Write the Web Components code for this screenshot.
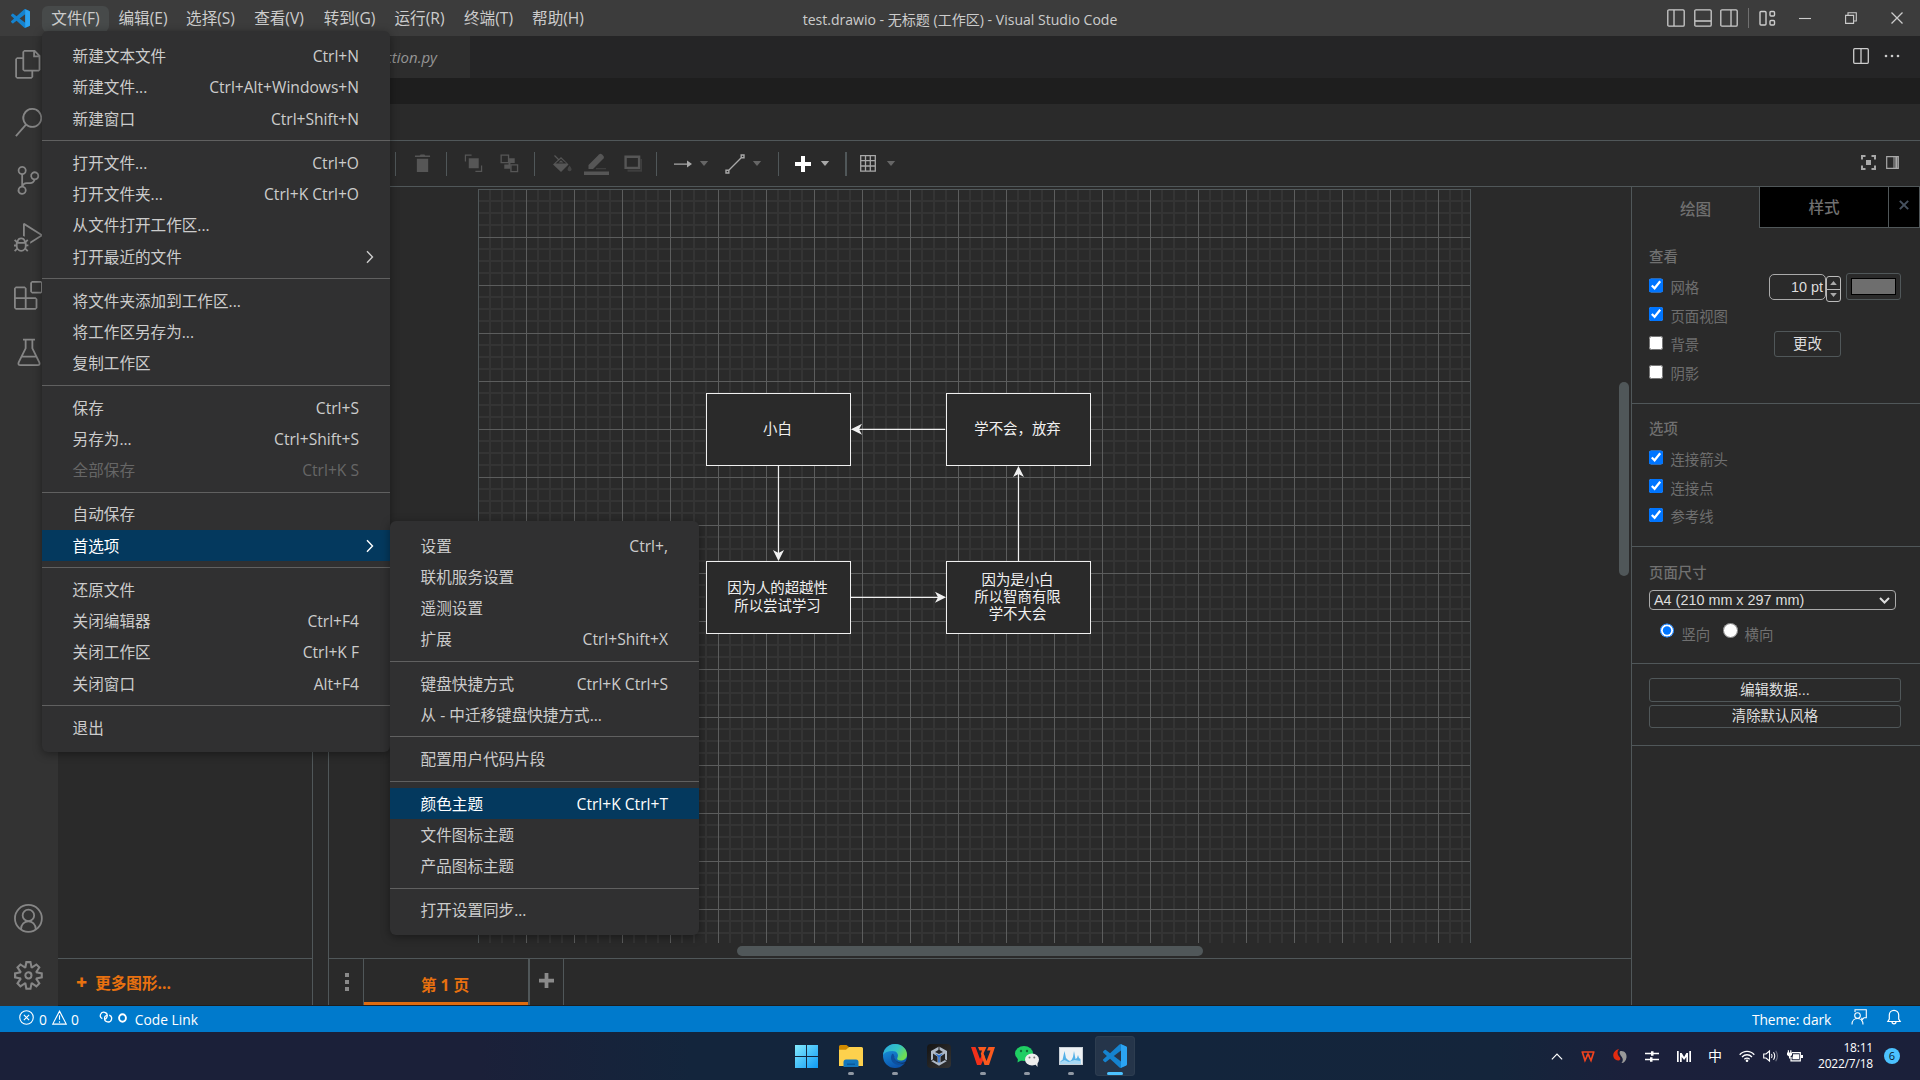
<!DOCTYPE html>
<html lang="zh-CN">
<head>
<meta charset="utf-8">
<title>test.drawio - 无标题 (工作区) - Visual Studio Code</title>
<style>
    html, body {
        margin: 0;
        width: 1920px;
        height: 1080px;
        overflow: hidden;
        background: #1e1e1e;
        font-family: "Open Sans", "Noto Sans CJK SC", sans-serif;
    }
</style>
</head>
<body>
<code-window></code-window>

<script>
const VSCODE = 'M23.15 2.587L18.21.21a1.494 1.494 0 0 0-1.705.29l-9.46 8.63-4.12-3.128a.999.999 0 0 0-1.276.057L.327 7.261A1 1 0 0 0 .326 8.74L3.899 12 .326 15.26a1 1 0 0 0 .001 1.479L1.65 17.94a.999.999 0 0 0 1.276.057l4.12-3.128 9.46 8.63a1.492 1.492 0 0 0 1.704.29l4.942-2.377A1.5 1.5 0 0 0 24 20.06V3.939a1.5 1.5 0 0 0-.85-1.352zm-5.146 14.861L10.826 12l7.178-5.448v10.896z'

// name: [viewBox, markup]
const ICONS = {
    vscode: ['0 0 24 24', `<path fill="#1583cf" d="${VSCODE}"/><path fill="#2ba4f3" d="M18 .2 23.2 2.6Q24 3 24 4v16q0 1-.8 1.4L18 23.8z"/>`],
    files: ['0 0 24 24', '<path d="M17.5 0h-9L7 1.5V6H2.5L1 7.5v15.07L2.5 24h12.07L16 22.57V18h4.7l1.3-1.43V4.5L17.5 0zm0 2.12l2.38 2.38H17.5V2.12zm-3 20.38h-12v-15H7v9.07L8.5 18h6v4.5zm6-6h-12v-15H16V6h4.5v10.5z"/>'],
    search: ['0 0 24 24', '<path d="M15.25 0a8.25 8.25 0 0 0-6.18 13.72L1 22.88l1.12 1 8.05-9.12A8.251 8.251 0 1 0 15.25.01V0zm0 15a6.75 6.75 0 1 1 0-13.5 6.75 6.75 0 0 1 0 13.5z"/>'],
    git: ['0 0 24 24', '<path d="M21.007 8.222A3.738 3.738 0 0 0 15.045 5.2a3.737 3.737 0 0 0 1.156 6.583 2.988 2.988 0 0 1-2.668 1.67h-2.99a4.456 4.456 0 0 0-2.989 1.165V7.4a3.737 3.737 0 1 0-1.494 0v9.117a3.776 3.776 0 1 0 1.816.099 2.99 2.99 0 0 1 2.668-1.667h2.99a4.484 4.484 0 0 0 4.223-3.039 3.736 3.736 0 0 0 3.25-3.687zM4.565 3.738a2.242 2.242 0 1 1 4.484 0 2.242 2.242 0 0 1-4.484 0zm4.484 16.441a2.242 2.242 0 1 1-4.484 0 2.242 2.242 0 0 1 4.484 0zm8.221-9.715a2.242 2.242 0 1 1 0-4.485 2.242 2.242 0 0 1 0 4.485z"/>'],
    debug: ['0 0 24 24', '<path d="M10.94 13.5l-1.32 1.32a3.73 3.73 0 0 0-7.24 0L1.06 13.5 0 14.56l1.72 1.72-.22.22V18H0v1.5h1.5v.08c.077.489.214.966.41 1.42L0 22.94 1.06 24l1.65-1.65A4.308 4.308 0 0 0 6 24a4.31 4.31 0 0 0 3.29-1.65L10.94 24 12 22.94 10.09 21c.198-.464.336-.951.41-1.45v-.1H12V18h-1.5v-1.5l-.22-.22L12 14.56l-1.06-1.06zM6 13.5a2.25 2.25 0 0 1 2.25 2.25h-4.5A2.25 2.25 0 0 1 6 13.5zm3 6a3.33 3.33 0 0 1-3 3 3.33 3.33 0 0 1-3-3v-2.25h6v2.25zm14.76-9.9v1.26L13.5 17.37V15.6l8.5-5.37L9 2v9.46a5.07 5.07 0 0 0-1.5-.72V.63L8.64 0l15.12 9.6z"/>'],
    extensions: ['0 0 24 24', '<path d="M13.5 1.5L15 0h7.5L24 1.5V9l-1.5 1.5H15L13.5 9V1.5zm1.5 0V9h7.5V1.5H15zM0 15V6l1.5-1.5H9L10.5 6v7.5H18l1.5 1.5v7.5L18 24H1.5L0 22.5V15zm9-1.5V6H1.5v7.5H9zM9 15H1.5v7.5H9V15zm1.5 7.5H18V15h-7.5v7.5z"/>'],
    beaker: ['0 0 24 24', '<g fill="none" stroke="currentColor" stroke-width="1.5"><path d="M7.5 1.4h10M9.7 1.4v7.2L3.9 20.3q-.8 2.3 1.4 2.3h14.4q2.2 0 1.4-2.3L15.3 8.6V1.4M6.6 15.5h11.8"/></g>'],
    account: ['0 0 24 24', '<g fill="none" stroke="currentColor" stroke-width="1.5"><circle cx="12" cy="12" r="11.2"/><circle cx="12" cy="9.5" r="4.8"/><path d="M5.8 21.2c0-9 12.4-9 12.4 0"/></g>'],
    gear: ['0 0 24 24', '<path d="M19.85 8.75l4.15.83v4.84l-4.15.83 2.35 3.52-3.43 3.43-3.52-2.35-.83 4.15H9.58l-.83-4.15-3.52 2.35-3.43-3.43 2.35-3.52L0 14.42V9.58l4.15-.83L1.8 5.23 5.23 1.8l3.52 2.35L9.58 0h4.84l.83 4.15 3.52-2.35 3.43 3.43-2.35 3.52zm-1.57 5.07l4-.81v-2l-4-.81-.54-1.3 2.29-3.43-1.43-1.43-3.43 2.29-1.3-.54-.81-4h-2l-.81 4-1.3.54-3.43-2.29-1.43 1.43L6.38 8.9l-.54 1.3-4 .81v2l4 .81.54 1.3-2.29 3.43 1.43 1.43 3.43-2.29 1.3.54.81 4h2l.81-4 1.3-.54 3.43 2.29 1.43-1.43-2.29-3.43.54-1.3zm-8.186-4.672A3.43 3.43 0 0 1 12 8.57 3.44 3.44 0 0 1 15.43 12a3.43 3.43 0 1 1-5.336-2.852zm.956 4.274c.281.188.612.288.95.288A1.7 1.7 0 0 0 13.71 12a1.71 1.71 0 1 0-2.66 1.422z"/>'],
    sideLeft: ['0 0 18 18', '<path fill="none" stroke="currentColor" stroke-width="1.3" d="M2 .8h14q1.2 0 1.2 1.2v14q0 1.2-1.2 1.2H2Q.8 17.2.8 16V2Q.8.8 2 .8zM7 1v16"/>'],
    panel: ['0 0 18 18', '<path fill="none" stroke="currentColor" stroke-width="1.3" d="M2 .8h14q1.2 0 1.2 1.2v14q0 1.2-1.2 1.2H2Q.8 17.2.8 16V2Q.8.8 2 .8zM1 12h16"/>'],
    sideRight: ['0 0 18 18', '<path fill="none" stroke="currentColor" stroke-width="1.3" d="M2 .8h14q1.2 0 1.2 1.2v14q0 1.2-1.2 1.2H2Q.8 17.2.8 16V2Q.8.8 2 .8zM11 1v16"/>'],
    layout: ['0 0 17 17', '<g fill="none" stroke="currentColor" stroke-width="1.4"><rect x="1" y="1.5" width="6" height="13.5" rx="1"/><rect x="11" y="1.5" width="4.5" height="4.5" rx="1"/><rect x="11" y="10.500" width="4.5" height="4.5" rx="1"/></g>'],
    minimize: ['0 0 12 12', '<path fill="none" stroke="currentColor" stroke-width="1.1" d="M0 6.5h12"/>'],
    restore: ['0 0 12 12', '<path fill="none" stroke="currentColor" stroke-width="1.1" d="M.6 3.4h8v8h-8zM3 3.4V.7h8.300v8.300H8.600"/>'],
    close: ['0 0 12 12', '<path fill="none" stroke="currentColor" stroke-width="1.3" d="M.5.5l11 11M11.5.5l-11 11"/>'],
    closeBold: ['0 0 12 12', '<path fill="none" stroke="currentColor" stroke-width="2.4" d="M1 1l10 10M11 1L1 11"/>'],
    split: ['0 0 16 16', '<path fill="none" stroke="currentColor" stroke-width="1.3" d="M1.7.7h12.600q1 0 1 1v12.600q0 1-1 1H1.7q-1 0-1-1V1.7q0-1 1-1zM8 1v14"/>'],
    more: ['0 0 16 4', '<circle cx="2" cy="2" r="1.3"/><circle cx="8" cy="2" r="1.3"/><circle cx="14" cy="2" r="1.3"/>'],
    chevron: ['0 0 8 14', '<path fill="none" stroke="currentColor" stroke-width="1.4" d="M1 1.2l5.5 5.800L1 12.800"/>'],
    trash: ['0 0 18 20', '<path d="M1 3V1.5h5L7 .5h4l1 1h5V3zM3 5h12v14H3z"/>'],
    front: ['0 0 20 20', '<path d="M5 4.5h10.500V15H5z"/><path fill="none" stroke="currentColor" stroke-width="1.3" d="M8 1.2H1.5V8M12 18.300h6.5V12"/>'],
    back: ['0 0 20 20', '<path d="M9 4.5h6.5v5H11v6H4.5V11H9z"/><path fill="none" stroke="currentColor" stroke-width="1.4" d="M1.2 1.2H9V9H1.2zM11.5 11.5h7v7h-7z"/>'],
    fill: ['0 0 20 18', '<path d="M9 2 1 9.5 9 17l7.5-7.5z"/><path d="M17.5 10.500q2.500 3 2 4.5-1.700 2.500-4 0-.4-1.500 2-4.500z" opacity=".6"/><path stroke="currentColor" fill="none" stroke-width="1.2" d="M2.500.5 9 7"/><path stroke="#2a2a2a" fill="none" stroke-width="1.2" d="M5 8l4-3.500L13 8z"/>'],
    pencil: ['0 0 25 22', '<path d="M4.5 16v-4L15 1.5q1.500-1.500 3 0l1.500 1.500q1 1.200 0 2.500L9 16z"/><path d="M12 15.200h10v1H12z" opacity=".6"/><path d="M0 18.500h25V22H0z"/>'],
    shadow: ['0 0 18 17', '<path fill="none" stroke="currentColor" stroke-width="2.4" d="M1.600 1.700h13.500v11.200H1.600z"/><path opacity=".45" d="M16.500 4H18v12.800H3.500v-2.300h13z"/>'],
    arrow: ['0 0 18 8', '<path d="M0 3.400h13V.5L18 4l-5 3.500V4.700H0z"/>'],
    line: ['0 0 20 20', '<path fill="none" stroke="currentColor" stroke-width="1.4" d="M3 17 17 3M1 16.200h2.800V19H1zM16.200 1H19v2.800h-2.800z"/>'],
    plus: ['0 0 16 16', '<path d="M6 0h4v6h6v4h-6v6H6v-6H0V6h6z"/>'],
    caret: ['0 0 10 6', '<path d="M0 0h10L5 6z"/>'],
    table: ['0 0 16 17', '<path fill="none" stroke="currentColor" stroke-width="1.3" d="M.7.7h14.600v15.400H.7zM5.500 1v15M10.300 1v15M1 5.700h14M1 11h14"/>'],
    fullscreen: ['0 0 15 15', '<path d="M5 5h5v5H5z"/><path fill="none" stroke="currentColor" stroke-width="2" d="M1 4.500V1h3.500M10.500 1H14v3.500M14 10.500V14h-3.500M4.500 14H1v-3.500"/>'],
    format: ['0 0 13 13', '<path fill="none" stroke="currentColor" stroke-width="1.2" d="M.7.7h11.600v11.600H.7z"/><path d="M7.500 1h1v11h-1zM9.300 1h2.200v11H9.300z"/>'],
    errorIcon: ['0 0 16 16', '<g fill="none" stroke="currentColor" stroke-width="1.2"><circle cx="8" cy="8" r="7.200"/><path d="M5.200 5.200l5.600 5.600M10.800 5.200l-5.600 5.600"/></g>'],
    warning: ['0 0 16 16', '<path fill="none" stroke="currentColor" stroke-width="1.2" d="M8 1.200 15.200 15H.8zM8 5.500v5M8 12v1.500"/>'],
    link: ['0 0 17 13', '<g fill="none" stroke="currentColor" stroke-width="1.4"><path d="M4.500 8.300A3.700 3.700 0 1 1 9.700 5.700C9.500 8 8 9 6.800 8.200"/><path d="M12 4.500a3.800 3.800 0 1 1-5 3.200c0-2 1.500-3.200 3-2.500"/></g>'],
    ring: ['0 0 9 10', '<ellipse cx="4.500" cy="5" rx="3.400" ry="3.700" fill="none" stroke="currentColor" stroke-width="1.900"/>'],
    feedback: ['0 0 16 16', '<g fill="none" stroke="currentColor" stroke-width="1.100"><path d="M4 3V.7h11.300v8H13l-2.200 2.500V8.700"/><circle cx="6.500" cy="6.500" r="2.800"/><path d="M1 15.500c0-8 11-8 11 0"/></g>'],
    bell: ['0 0 14 16', '<path fill="none" stroke="currentColor" stroke-width="1.2" d="M.8 12.500 2.300 10V6a4.700 4.700 0 0 1 9.400 0v4l1.500 2.500zM5 12.800c0 2.700 4 2.700 4 0"/>'],
    windows: ['0 0 24 24', '<defs><linearGradient id="g" gradientUnits="userSpaceOnUse" x2="24" y2="24"><stop stop-color="#83eafd"/><stop offset="1" stop-color="#0e9af5"/></linearGradient></defs><path fill="url(#g)" d="M0 0h11.500v11.500H0zM12.500 0H24v11.500H12.500zM0 12.500h11.500V24H0zM12.500 12.500H24V24H12.500z"/>'],
    folder: ['0 0 24 22', '<path fill="#d18b00" d="M0 1.500Q0 0 1.500 0h6l2.500 2-2 3H0z"/><path fill="#fdd14d" d="M0 4.800h7L10 2h12.500Q24 2 24 3.500V21H0z"/><path fill="#1377bd" d="M4.500 22v-5q0-2.500 2.500-2.500h10q2.500 0 2.500 2.500v5z"/><path fill="#0b5a9c" d="M8 18.500h8v1.500H8z"/>'],
    edge: ['0 0 24 24', '<defs><linearGradient id="a" x2="1" y2=".5"><stop stop-color="#2aa7df"/><stop offset=".6" stop-color="#33c4c4"/><stop offset="1" stop-color="#6fdd52"/></linearGradient><linearGradient id="b" y2="1" x2=".4"><stop stop-color="#1b9de2"/><stop offset="1" stop-color="#0b55ae"/></linearGradient></defs><circle cx="12" cy="12" r="12" fill="url(#b)"/><path fill="url(#a)" d="M0 11C1 4 6 0 12 0c7 0 12 5 12 10.500 0 4-3 6-6.500 6-3 0-4-1.500-3-3 1.500-3-.5-6.500-5-6.500C5 7 1.500 8.500 0 11z"/><path fill="#0d4f9e" d="M9 10c-3 5 1 11 7 11 3 0 5-1 6.300-2.800-5 2.300-12 .3-11.300-6.200 0-1.500-1-2.500-2-2z"/><path fill="#15243a" d="M11.600 10.500c-2 4.500 3 9 8.500 8.300 2-.4 3-1.300 3.900-2.800v5l-1 1c-.5-1 0-2.500.2-3.200-5.200 2-12.200-.8-12.200-6.300z"/>'],
    cube: ['0 0 24 24', '<defs><linearGradient id="k" x2="1" y2="1"><stop stop-color="#141414"/><stop offset="1" stop-color="#343434"/></linearGradient></defs><rect width="24" height="24" rx="4" fill="url(#k)"/><path fill="#aeb9c6" d="M12 2.500l8 4.500v10l-8 4.800L4 17V7z"/><path fill="#242526" d="M12 5.500 16 8l-4 2-4-2zM6 9.500l4.500 3v6L6 16zM18 9.500l-4.500 3v6L18 16z"/><path fill="#2b6fd0" d="M8 9.500l4 1.800 4-1.800-3.200 3.600v5.400h-1.600v-5.400z"/><path stroke="#242526" d="M12 2v4M4 17l3-2M20 17l-3-2"/>'],
    wps: ['0 0 24 18', '<path fill="#f2301a" d="M0 0h4.500L9 12l3-6.500 1.800 4L10 18H6z"/><path fill="#fb5a1e" d="M7 0h8.500l-3 6.500L15.500 14 19.500 3.500H16L17.500 0H24l-6 18h-4.500L9.800 6.800 11 3.500H8.500z"/>'],
    wechat: ['0 0 24 21', '<ellipse cx="9" cy="7.500" rx="9" ry="7.500" fill="#1fce63"/><path fill="#1fce63" d="M3 12l-.5 4.500L7 14z"/><circle cx="6" cy="5" r="1.200" fill="#12713a"/><circle cx="12" cy="5" r="1.200" fill="#12713a"/><ellipse cx="17" cy="13.500" rx="7" ry="6" fill="#eee"/><path fill="#eee" d="M20 18l2.500 3V16z"/><circle cx="14.500" cy="11.500" r="1" fill="#777"/><circle cx="19.300" cy="11.500" r="1" fill="#777"/>'],
    monitor: ['0 0 24 18', '<path fill="#c9d0d7" d="M0 0h24v18H0z"/><path fill="#eef2f5" d="M1 1h22v16H1z"/><path fill="#54b1e8" d="M1.500 14l2-1 2-9 1.500 7 2 2 2 1 1.500-1 1.500-3 1-6 1.500 8 1.500-1 1-3 1 3 1.500 1V17h-20z"/><path fill="#a9d9f5" d="M1.500 15l4-2 4 2 6-2 6 1v3h-20z"/>'],
    trayUp: ['0 0 14 8', '<path fill="none" stroke="currentColor" stroke-width="1.4" d="M1 7.300 7 1.200l6 6.100"/>'],
    wpsSmall: ['0 0 14 11', '<path fill="none" stroke="#f0431f" stroke-width="1.700" d="M.5 1h13M1.300 1l2.700 8.500L7 3l3 6.500L12.800 1M5.200 4.500h3.600"/>'],
    sogou: ['0 0 14 14', '<path fill="#e22b10" d="M6 0C2 1-.5 4 .5 8c.7 2.500 3.500 4 5.500 3.500 2-1 1.500-2.500 0-4C4 5.500 4 2 6 0z"/><path fill="#999" d="M7.500 2c4-.5 6.500 2.500 6 6.500C13 12 11 14 8.500 14c1.700-2 1.700-4 .3-6S5.500 3.500 7.500 2z"/>'],
    sliders: ['0 0 14 11', '<path d="M0 1.700h6V.3h2.500v1.400H14v1.600H8.500v1.400H6V3.300H0zM0 7.700h5V6.300h2.500v1.400H14v1.600H7.500v1.400H5V9.300H0z"/>'],
    bars: ['0 0 14 11', '<path d="M0 0h1.700v11H0zM3 2h1.700l2.400 4 2.300-4H11v9H9.400V6L7.100 9 4.700 6v5H3zM12.300 0H14v11h-1.700z"/>'],
    wifi: ['0 0 16 12', '<g fill="none" stroke="currentColor" stroke-width="1.300"><path d="M.7 4.700c4-4.500 10.600-4.500 14.600 0"/><path d="M3 7c3-3 7-3 10 0"/><path d="M5.300 9.200c2-1.700 3.400-1.700 5.400 0"/></g><circle cx="8" cy="10.700" r="1.300"/>'],
    speaker: ['0 0 16 12', '<g fill="none" stroke="currentColor" stroke-width="1.100"><path d="M.7 4H3l3.500-3v10L3 8H.7zM8.500 4q1.200 2 0 4M10.500 2.300q2.500 3.700 0 7.400"/><path opacity=".35" d="M12.700.8q3.500 5 0 10.400"/></g>'],
    battery: ['0 0 16 12', '<path fill="none" stroke="currentColor" stroke-width="1.2" d="M5 2.600h8.300v8.200H4V7"/><path d="M6 4.300h6v4.900H5.500V7L6 6zM14 5h2v3h-2zM0 2.500h5V5L3.500 6.500v2H2v-2L0 5zM.8.3H2V3H.8zM3.200.3h1.200V3H3.200z"/>'],
    dots: ['0 0 4 18', '<path d="M0 0h4v4H0zM0 7h4v4H0zM0 14h4v4H0z"/>']
}

class UiIcon extends HTMLElement {
    constructor() {
        super()
        this.attachShadow({mode: 'open'})
    }

    connectedCallback() {
        const [box, body] = ICONS[this.getAttribute('name')]
        const w = this.getAttribute('w')
        const h = this.getAttribute('h') || w
        this.shadowRoot.innerHTML = `
        <style>
        :host { display: block; flex: none; width: ${w}px; height: ${h}px; }
        svg { display: block; width: 100%; height: 100%; overflow: visible; }
        </style>
        <svg viewBox="${box}" fill="currentColor">${body}</svg>`
    }
}
customElements.define('ui-icon', UiIcon)

// Base for the parts that only print a template
class BasePart extends HTMLElement {
    constructor() {
        super()
        this.attachShadow({mode: 'open'})
    }

    connectedCallback() {
        const template = document.createElement('template')
        template.innerHTML = `<style>* { box-sizing: border-box; }${this.getStyle()}</style>${this.getTemplate()}`
        this.shadowRoot.appendChild(template.content.cloneNode(true))
    }
}

class TitleBar extends BasePart {
    getTemplate() {
        const menus = [['文件(F)', 67], ['编辑(E)', 68], ['选择(S)', 67], ['查看(V)', 70], ['转到(G)', 71], ['运行(R)', 69], ['终端(T)', 69], ['帮助(H)', 70]]
        return `
        <div class="left">
            <ui-icon name="vscode" w="19"></ui-icon>
            <nav>${menus.map(([m, w], i) => `<span class="${i ? '' : 'open'}" style="width:${w}px">${m}</span>`).join('')}</nav>
        </div>
        <div class="title">test.drawio - 无标题 (工作区) - Visual Studio Code</div>
        <div class="right">
            <ui-icon name="sideLeft" w="18"></ui-icon>
            <ui-icon name="panel" w="18"></ui-icon>
            <ui-icon name="sideRight" w="18"></ui-icon>
            <i></i>
            <ui-icon name="layout" w="17"></ui-icon>
            <div class="win">
                <ui-icon name="minimize" w="12"></ui-icon>
                <ui-icon name="restore" w="12"></ui-icon>
                <ui-icon name="close" w="12"></ui-icon>
            </div>
        </div>`
    }

    getStyle() {
        return `
        :host { display: grid; grid-template-columns: 1fr auto 1fr; align-items: center; height: 36px; background: #3c3c3c; color: #ccc; }
        .left { display: flex; align-items: center; padding-left: 11px; }
        nav { display: flex; margin-left: 12px; }
        nav span { height: 26px; line-height: 25px; text-align: center; font-size: 15.6px; border-radius: 6px; white-space: nowrap; margin-top: 1px; }
        .open { background: #474a4a; }
        .title { font-size: 14.05px; white-space: nowrap; margin-top: 1px; }
        .right { display: flex; align-items: center; justify-content: flex-end; }
        .right > ui-icon { margin-right: 8.5px; }
        i { width: 1px; height: 20px; background: #707070; margin: 0 10px 0 1px; }
        .win { display: flex; gap: 34px; margin-left: 15px; padding-right: 17px; }`
    }
}
customElements.define('title-bar', TitleBar)

class ActivityBar extends BasePart {
    getTemplate() {
        const cell = n => `<div><ui-icon name="${n}" w="28.8"></ui-icon></div>`
        return `
        <section>${['files', 'search', 'git', 'debug', 'extensions', 'beaker'].map(cell).join('')}</section>
        <section>${['account', 'gear'].map(cell).join('')}</section>`
    }

    getStyle() {
        return `
        :host { display: flex; flex-direction: column; justify-content: space-between; width: 58px; background: #333; color: #868686; padding-bottom: 1.6px; box-sizing: border-box; }
        section:first-child { margin-top: -2px; }
        div { height: 57.6px; width: 57px; display: flex; align-items: center; justify-content: center; }`
    }
}
customElements.define('activity-bar', ActivityBar)

class MenuItem extends HTMLElement {
    constructor() {
        super()
        this.attachShadow({mode: 'open'})
    }

    connectedCallback() {
        const keys = this.getAttribute('keys')
        this.shadowRoot.innerHTML = `
        <style>
        :host { display: flex; align-items: center; justify-content: space-between; height: 31.2px; padding: 0 31px 0 30.6px; font-size: 15.6px; line-height: 22px; color: #ccc; white-space: nowrap; }
        :host([active]) { background: #04395e; color: #fff; }
        :host([disabled]) { color: #666; }
        ui-icon { margin-right: -15px; }
        </style>
        <span><slot></slot></span>
        ${keys ? `<span>${keys}</span>` : ''}
        ${this.hasAttribute('sub') ? '<ui-icon name="chevron" w="8" h="14"></ui-icon>' : ''}`
    }
}
customElements.define('menu-item', MenuItem)

class MenuPanel extends BasePart {
    getTemplate() {
        return '<slot></slot>'
    }

    getStyle() {
        return `
        :host { display: block; box-sizing: border-box; padding: 9.6px 0 9px; background: #303031; border-radius: 6px; box-shadow: 0 2px 10px rgba(0, 0, 0, .4); }
        ::slotted(hr) { height: 1px; margin: 6px 0 6.2px; border: 0; background: #606060; }`
    }
}
customElements.define('menu-panel', MenuPanel)

class DrawToolbar extends BasePart {
    getTemplate() {
        // [icon, width, height, gap before, colour class]
        const items = [
            ['|', 1, 0, 337], ['trash', 17, 19, 18, 'off'], ['|', 1, 0, 15], ['front', 19, 19, 17, 'off'], ['back', 19, 19, 17, 'off'],
            ['|', 1, 0, 15], ['fill', 20, 18, 17, 'off'], ['pencil', 25, 22, 12, 'off'], ['shadow', 18, 17, 15, 'off'],
            ['|', 1, 0, 14], ['arrow', 18, 8, 17], ['caret', 10, 5, 7, 'dim'], ['line', 20, 20, 16], ['caret', 10, 5, 7, 'dim'],
            ['|', 1, 0, 16], ['plus', 16, 16, 16, 'on'], ['caret', 10, 5, 9], ['|', 2, 0, 15], ['table', 16, 17, 13], ['caret', 10, 5, 10, 'dim']
        ]
        return items.map(([n, w, h, gap, c]) => n === '|'
            ? `<i style="width:${w}px;margin-left:${gap}px"></i>`
            : `<ui-icon class="${c || ''}" name="${n}" w="${w}" h="${h}" style="margin-left:${gap}px"></ui-icon>`).join('') + `
        <div><ui-icon name="fullscreen" w="15"></ui-icon><ui-icon name="format" w="13"></ui-icon></div>`
    }

    getStyle() {
        return `
        :host { display: flex; align-items: center; height: 47px; box-sizing: border-box; border: 1px solid #505759; border-width: 1px 0; color: #a8a8a8; }
        i { height: 24px; background: #505759; flex: none; }
        .off { color: #565656; }
        .dim { color: #666; }
        .on { color: #fff; }
        div { margin-left: auto; display: flex; gap: 10px; align-items: center; padding: 0 21px 2px 0; }`
    }
}
customElements.define('draw-toolbar', DrawToolbar)

class DiagramNode extends BasePart {
    getTemplate() {
        return '<span><slot></slot></span>'
    }

    getStyle() {
        return `
        :host { position: absolute; display: flex; align-items: center; justify-content: center; box-sizing: border-box; width: 145px; height: 73px; padding: 0 2px 2px 0; background: #2a2a2a; border: 1.2px solid #f0f0f0; color: #f0f0f0; font-size: 14.4px; line-height: 17.2px; text-align: center; }`
    }
}
customElements.define('diagram-node', DiagramNode)

class DiagramCanvas extends BasePart {
    getTemplate() {
        return `
        <svg width="1302" height="771">
            <defs>
                <pattern id="grid" width="48" height="48" patternUnits="userSpaceOnUse" x="149" y="2">
                    <path d="M12 0v48M24 0v48M36 0v48M0 12h48M0 24h48M0 36h48" stroke="#343434" stroke-width="2"/>
                    <path d="M.5 0v48M0 .5h48" stroke="#5c5d5d"/>
                </pattern>
            </defs>
            <rect x="149" y="2" width="993" height="754" fill="url(#grid)"/>
            <path d="M149.5 756V2.500h992V756" fill="none" stroke="#505759"/>
            <g stroke="#f0f0f0" stroke-width="1.2" fill="#f0f0f0">
                <path d="M616 242.300H527M449.500 279v88M522 410.300h89M689.500 374v-88"/>
                <path stroke="none" d="M522 242.300l11-5.500-3 5.500 3 5.500zM449.500 374l-5.500-11 5.500 3 5.500-3zM617 410.300l-11-5.500 3 5.500-3 5.500zM689.500 279l-5.500 11 5.500-3 5.500 3z"/>
            </g>
        </svg>
        <slot></slot>
        <b class="v"></b><b class="h"></b>`
    }

    getStyle() {
        return `
        :host { display: block; position: relative; height: 771px; }
        svg { display: block; }
        b { position: absolute; background: #505759; border-radius: 5px; }
        .v { left: 1290px; top: 195px; width: 10px; height: 194px; }
        .h { left: 408px; top: 759px; width: 466px; height: 10px; }`
    }
}
customElements.define('diagram-canvas', DiagramCanvas)

class PageTabs extends BasePart {
    getTemplate() {
        return `
        <div class="dots"><ui-icon name="dots" w="4" h="18"></ui-icon></div>
        <div class="page">第 1 页</div>
        <div class="add"><ui-icon name="plus" w="15"></ui-icon></div>`
    }

    getStyle() {
        return `
        :host { display: flex; height: 47px; box-sizing: border-box; border-top: 1px solid #505759; color: #8a8a8a; }
        div { display: flex; align-items: center; justify-content: center; border-right: 1px solid #505759; }
        .dots { width: 35px; padding-left: 1px; }
        .page { width: 166px; border-right-width: 2px; color: #e8710f; font-weight: bold; font-size: 15.6px; position: relative; padding: 5px 2px 0 0; }
        .page::after { content: ""; position: absolute; left: 0; right: 0; bottom: 0; height: 3px; background: #e06c0f; }
        .add { width: 34px; padding-bottom: 4px; }`
    }
}
customElements.define('page-tabs', PageTabs)

class CheckRow extends HTMLElement {
    constructor() {
        super()
        this.attachShadow({mode: 'open'})
    }

    connectedCallback() {
        const on = this.hasAttribute('on') ? 'checked' : ''
        this.shadowRoot.innerHTML = `
        <style>
        :host { display: flex; align-items: center; height: 28.8px; font-size: 14.4px; color: #6e6e6e; }
        input { width: 14.4px; height: 14.4px; margin: 0 7px 0 0; flex: none; }
        span { padding-top: 5px; line-height: 20px; }
        .end { margin-left: auto; display: flex; align-items: center; padding: 0; }
        </style>
        <input type="checkbox" ${on}><span>${this.getAttribute('label')}</span>
        <div class="end"><slot></slot></div>`
    }
}
customElements.define('check-row', CheckRow)

class FormatPanel extends BasePart {
    getTemplate() {
        return `
        <header>
            <div class="tab">绘图</div>
            <div class="tab dark">样式</div>
            <div class="tab dark x"><ui-icon name="closeBold" w="10"></ui-icon></div>
        </header>
        <section class="view">
            <h4>查看</h4>
            <check-row on label="网格">
                <div class="num">10 pt</div>
                <div class="spin"><ui-icon name="caret" w="7" h="4"></ui-icon><ui-icon name="caret" w="7" h="4"></ui-icon></div>
                <div class="swatch"><b></b></div>
            </check-row>
            <check-row on label="页面视图"></check-row>
            <check-row label="背景"><div class="btn change">更改</div></check-row>
            <check-row label="阴影"></check-row>
        </section>
        <section class="options">
            <h4>选项</h4>
            <check-row on label="连接箭头"></check-row>
            <check-row on label="连接点"></check-row>
            <check-row on label="参考线"></check-row>
        </section>
        <section class="size">
            <h4>页面尺寸</h4>
            <div class="select"><span>A4 (210 mm x 297 mm)</span>
                <svg width="11" height="7" viewBox="0 0 11 7"><path d="M1 1l4.500 4.500L10 1" fill="none" stroke="#ddd" stroke-width="2"/></svg></div>
            <div class="radios">
                <input type="radio" checked><label>竖向</label>
                <input type="radio"><label>横向</label>
            </div>
        </section>
        <section class="actions">
            <div class="btn">编辑数据...</div>
            <div class="btn">清除默认风格</div>
        </section>`
    }

    getStyle() {
        return `
        :host { display: block; width: 289px; box-sizing: border-box; border-left: 1px solid #505759; font-family: "Liberation Sans", "Noto Sans CJK SC", sans-serif; font-size: 14.4px; color: #707070; }
        header { display: flex; height: 41px; }
        .tab { width: 127px; display: flex; align-items: center; justify-content: center; font-size: 15.6px; font-weight: 500; }
        .dark { width: 130px; background: #000; border: 1px solid #505759; border-top: 0; padding-bottom: 2px; }
        .x { width: 31px; border-left: 0; color: #46515f; padding-bottom: 4px; }
        section { border-bottom: 1px solid #505759; padding: 0 19px 0 17px; }
        h4 { margin: 0 0 4px; height: 20px; line-height: 20px; font-size: 14.4px; font-weight: 500; }
        .view { height: 176px; padding-top: 19px; }
        .options { height: 143px; padding-top: 15px; }
        .size { height: 117px; padding-top: 16px; }
        .actions { height: 82px; padding-top: 14px; }
        .num { width: 57px; height: 26px; line-height: 24px; border: 1px solid #aaa; border-radius: 5px; text-align: right; padding-right: 2px; color: #ddd; margin-top: 3px; white-space: nowrap; }
        .spin { width: 15px; height: 26px; border: 1px solid #bbb; border-radius: 3px; display: flex; flex-direction: column; align-items: center; justify-content: space-around; color: #aaa; margin: 7px 5px 0 0; background: linear-gradient(#bbb, #bbb) 0 12px / 100% 1px no-repeat; }
        .spin ui-icon:first-child { transform: rotate(180deg); }
        .swatch { width: 55px; height: 27px; border: 1px solid #505759; border-radius: 3px; padding: 4px; margin-top: 2px; }
        .swatch b { display: block; height: 17px; background: #6e6e6e; border: 1px solid #000; }
        .btn { border: 1px solid #505759; border-radius: 3px; color: #ddd; text-align: center; height: 24px; line-height: 23px; margin-bottom: 3px; white-space: nowrap; }
        .btn + .btn { height: 23px; line-height: 21px; }
        .change { width: 67px; height: 26px; line-height: 24px; margin: 2px 60px 0 0; }
        .select { display: flex; align-items: center; justify-content: space-between; width: 247px; height: 20px; margin-top: 7px; border: 1px solid #aaa; border-radius: 4px; padding: 0 5px 0 4px; color: #ddd; line-height: 18px; }
        .radios { display: flex; align-items: center; margin-top: 6px; height: 29px; padding-left: 11px; }
        .radios input { width: 14.4px; height: 14.4px; margin: 0 7px 0 0; }
        label { padding-top: 6px; margin-right: 13px; }`
    }
}
customElements.define('format-panel', FormatPanel)

class EditorArea extends BasePart {
    getTemplate() {
        return `
        <div class="tabs">
            <div class="tab">ction.py</div>
            <div class="acts"><ui-icon name="split" w="16"></ui-icon><ui-icon name="more" w="16" h="4"></ui-icon></div>
        </div>
        <div class="crumbs"></div>
        <div class="menubar"></div>
        <draw-toolbar></draw-toolbar>
        <div class="body">
            <aside><div class="shapes"><b>+</b>更多图形...</div></aside>
            <div class="split"></div>
            <main>
                <diagram-canvas>
                    <diagram-node style="left:377px;top:206px">小白</diagram-node>
                    <diagram-node style="left:617px;top:206px">学不会，放弃</diagram-node>
                    <diagram-node style="left:377px;top:374px">因为人的超越性<br>所以尝试学习</diagram-node>
                    <diagram-node style="left:617px;top:374px">因为是小白<br>所以智商有限<br>学不大会</diagram-node>
                </diagram-canvas>
                <page-tabs></page-tabs>
            </main>
            <format-panel></format-panel>
        </div>`
    }

    getStyle() {
        return `
        :host { display: flex; flex-direction: column; flex: 1; background: #2a2a2a; }
        .tabs { height: 42px; flex: none; display: flex; justify-content: space-between; background: #252526; color: #ccc; }
        .tab { width: 412px; background: #2d2d2d; padding-right: 33px; text-align: right; font: italic 15px/43px "Open Sans"; color: #959595; }
        .acts { display: flex; align-items: center; gap: 15px; padding: 0 20px 2px 0; }
        .crumbs { height: 26px; flex: none; background: #1e1e1e; }
        .menubar { height: 36px; flex: none; }
        .body { display: flex; flex: 1; border-bottom: 1px solid #1e1e1e; }
        aside { width: 255px; border-right: 1px solid #505759; display: flex; flex-direction: column; justify-content: flex-end; }
        .shapes { height: 47px; border-top: 1px solid #505759; display: flex; align-items: center; padding: 0 0 0 18px; color: #e8710f; font-weight: bold; font-size: 15.6px; }
        .shapes b { margin-right: 8px; font-size: 19px; }
        .split { width: 15px; }
        main { flex: 1; border-left: 1px solid #505759; }`
    }
}
customElements.define('editor-area', EditorArea)

class StatusBar extends BasePart {
    getTemplate() {
        return `
        <div class="problems"><ui-icon name="errorIcon" w="15"></ui-icon><span>0</span><ui-icon name="warning" w="15"></ui-icon><span>0</span></div>
        <div class="link"><ui-icon name="link" w="16" h="12"></ui-icon><ui-icon name="ring" w="9" h="10"></ui-icon><span>Code Link</span></div>
        <div class="right"><span>Theme: dark</span><ui-icon name="feedback" w="16"></ui-icon><ui-icon name="bell" w="14" h="16"></ui-icon></div>`
    }

    getStyle() {
        return `
        :host { display: flex; height: 26px; background: #007acc; color: #fff; font-size: 13.8px; line-height: 20px; }
        div { display: flex; align-items: center; }
        ui-icon { margin-bottom: 4px; }
        span { padding-top: 2px; white-space: nowrap; }
        .problems { padding-left: 19px; }
        .problems span { margin: 0 5px; }
        .problems span:last-child { margin-left: 4px; }
        .link { margin-left: 14px; }
        .link ui-icon + ui-icon { margin: 0 8px 3px 4px; }
        .right { margin-left: auto; padding-right: 19px; }
        .right span { letter-spacing: -.15px; }
        .right ui-icon { margin-left: 20px; }`
    }
}
customElements.define('status-bar', StatusBar)

class TaskBar extends BasePart {
    getTemplate() {
        const apps = [['windows', 23, 23], ['folder', 24, 22, 1], ['edge', 24, 24, 1], ['cube', 24, 24], ['wps', 24, 18, 1], ['wechat', 24, 21, 1], ['monitor', 24, 18, 1], ['vscode', 24, 24, 2]]
        return `
        <div class="apps">${apps.map(([n, w, h, s]) => `<div class="${s === 2 ? 'app current' : s ? 'app running' : 'app'}"><ui-icon name="${n}" w="${w}" h="${h}"></ui-icon></div>`).join('')}</div>
        <div class="tray">
            <ui-icon name="trayUp" w="12" h="7"></ui-icon>
            <ui-icon name="wpsSmall" w="14" h="11"></ui-icon>
            <ui-icon name="sogou" w="14"></ui-icon>
            <ui-icon name="sliders" w="14" h="11"></ui-icon>
            <ui-icon name="bars" w="14" h="11"></ui-icon>
            <span>中</span>
            <ui-icon class="net" name="wifi" w="16" h="12"></ui-icon>
            <ui-icon class="net" name="speaker" w="16" h="12"></ui-icon>
            <ui-icon class="net" name="battery" w="16" h="12"></ui-icon>
            <time>18:11<br>2022/7/18</time>
            <em>6</em>
        </div>`
    }

    getStyle() {
        return `
        :host { display: flex; height: 48px; background: linear-gradient(90deg, #1b2039 0, #1b2039 25%, #13253c 36%, #13253c 62%, #14253b 78%, #1b203b 85%, #1b203a); color: #fff; }
        .apps { display: flex; gap: 4px; padding: 4px 0 0 787px; }
        .app { width: 40px; height: 40px; border-radius: 4px; display: flex; align-items: center; justify-content: center; position: relative; }
        .app:first-child { padding-right: 2px; }
        .current { background: #25354a; box-shadow: inset 0 0 0 1px #2d3d50; }
        .running::after, .current::after { content: ""; position: absolute; bottom: 1px; width: 6px; height: 3px; border-radius: 2px; background: #9098a3; }
        .current::after { width: 16px; background: #4cc2ff; }
        .tray { margin-left: auto; display: flex; align-items: center; gap: 18px; padding-right: 20px; }
        .tray span { font: 14px "Noto Sans CJK SC"; margin: -2px -1px 0; }
        .net { margin-right: -10px; }
        time { font: 12px/16px "Open Sans"; letter-spacing: -.2px; text-align: right; width: 61px; margin-left: 1px; white-space: nowrap; }
        em { width: 16px; height: 16px; border-radius: 8px; background: #4cc2ff; color: #0a1a2a; font: 11px/16px "Open Sans"; text-align: center; margin-left: -7px; }`
    }
}
customElements.define('task-bar', TaskBar)

class CodeWindow extends BasePart {
    getTemplate() {
        return `
        <title-bar></title-bar>
        <div class="work"><activity-bar></activity-bar><editor-area></editor-area></div>
        <status-bar></status-bar>
        <task-bar></task-bar>
        <menu-panel class="file">
            <menu-item keys="Ctrl+N">新建文本文件</menu-item>
            <menu-item keys="Ctrl+Alt+Windows+N">新建文件...</menu-item>
            <menu-item keys="Ctrl+Shift+N">新建窗口</menu-item>
            <hr>
            <menu-item keys="Ctrl+O">打开文件...</menu-item>
            <menu-item keys="Ctrl+K Ctrl+O">打开文件夹...</menu-item>
            <menu-item>从文件打开工作区...</menu-item>
            <menu-item sub>打开最近的文件</menu-item>
            <hr>
            <menu-item>将文件夹添加到工作区...</menu-item>
            <menu-item>将工作区另存为...</menu-item>
            <menu-item>复制工作区</menu-item>
            <hr>
            <menu-item keys="Ctrl+S">保存</menu-item>
            <menu-item keys="Ctrl+Shift+S">另存为...</menu-item>
            <menu-item disabled keys="Ctrl+K S">全部保存</menu-item>
            <hr>
            <menu-item>自动保存</menu-item>
            <menu-item active sub>首选项</menu-item>
            <hr>
            <menu-item>还原文件</menu-item>
            <menu-item keys="Ctrl+F4">关闭编辑器</menu-item>
            <menu-item keys="Ctrl+K F">关闭工作区</menu-item>
            <menu-item keys="Alt+F4">关闭窗口</menu-item>
            <hr>
            <menu-item>退出</menu-item>
        </menu-panel>
        <menu-panel class="prefs">
            <menu-item keys="Ctrl+,">设置</menu-item>
            <menu-item>联机服务设置</menu-item>
            <menu-item>遥测设置</menu-item>
            <menu-item keys="Ctrl+Shift+X">扩展</menu-item>
            <hr>
            <menu-item keys="Ctrl+K Ctrl+S">键盘快捷方式</menu-item>
            <menu-item>从 - 中迁移键盘快捷方式...</menu-item>
            <hr>
            <menu-item>配置用户代码片段</menu-item>
            <hr>
            <menu-item active keys="Ctrl+K Ctrl+T">颜色主题</menu-item>
            <menu-item>文件图标主题</menu-item>
            <menu-item>产品图标主题</menu-item>
            <hr>
            <menu-item>打开设置同步...</menu-item>
        </menu-panel>`
    }

    getStyle() {
        return `
        :host { display: flex; flex-direction: column; position: relative; width: 1920px; height: 1080px; overflow: hidden; }
        .work { display: flex; flex: 1; min-height: 0; }
        menu-panel { position: absolute; }
        .file { left: 42px; top: 31px; width: 348px; }
        .prefs { left: 390px; top: 520.5px; width: 309px; }`
    }
}
customElements.define('code-window', CodeWindow)
</script>
</body>
</html>
